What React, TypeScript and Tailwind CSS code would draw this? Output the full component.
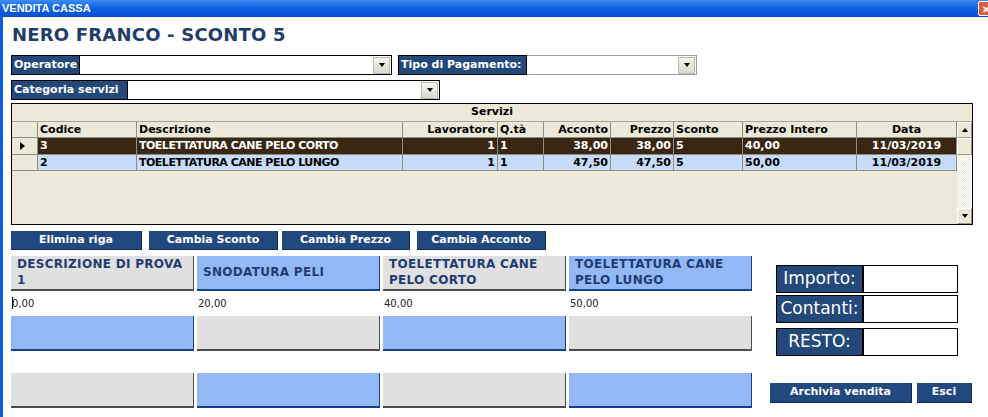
import clsx from 'clsx';

const comic = "font-['DejaVu_Sans',sans-serif] font-bold";
const tahoma = "font-['Liberation_Sans',Arial,sans-serif] font-bold";
const gridFont = "font-['DejaVu_Sans',Tahoma,sans-serif] font-bold";
const verdana = "font-['DejaVu_Sans',Verdana,sans-serif]";

type Col = { title: string; align: string };

const columns: Col[] = [
  { title: '', align: 'text-left' },
  { title: 'Codice', align: 'text-left' },
  { title: 'Descrizione', align: 'text-left' },
  { title: 'Lavoratore', align: 'text-right' },
  { title: 'Q.tà', align: 'text-left' },
  { title: 'Acconto', align: 'text-right' },
  { title: 'Prezzo', align: 'text-right' },
  { title: 'Sconto', align: 'text-left' },
  { title: 'Prezzo Intero', align: 'text-left' },
  { title: 'Data', align: 'text-center' },
];

const righe = [
  ['3', 'TOELETTATURA CANE PELO CORTO', '1', '1', '38,00', '38,00', '5', '40,00', '11/03/2019'],
  ['2', 'TOELETTATURA CANE PELO LUNGO', '1', '1', '47,50', '47,50', '5', '50,00', '11/03/2019'],
];

const gridCols = 'grid grid-cols-[26px_99px_266px_95px_46px_67px_63px_69px_114px_100px]';

type TileData = { text: string; blue: boolean };

const tiles: TileData[][] = [
  [
    { text: 'DESCRIZIONE DI PROVA 1', blue: false },
    { text: 'SNODATURA PELI', blue: true },
    { text: 'TOELETTATURA CANE PELO CORTO', blue: false },
    { text: 'TOELETTATURA CANE PELO LUNGO', blue: true },
  ],
  [
    { text: '', blue: true },
    { text: '', blue: false },
    { text: '', blue: true },
    { text: '', blue: false },
  ],
  [
    { text: '', blue: false },
    { text: '', blue: true },
    { text: '', blue: false },
    { text: '', blue: true },
  ],
];

const prezzi = ['0,00', '20,00', '40,00', '50,00'];

const DropArrow = () => (
  <div className="w-[17px] h-[17px] bg-linear-to-b from-[#f6f5f0] to-[#dcd9cc] border border-[#bcb9ab] flex items-center justify-center">
    <span className="block w-0 h-0 border-l-[3.5px] border-r-[3.5px] border-t-[4px] border-l-transparent border-r-transparent border-t-black" />
  </div>
);

const Label = ({ text, width }: { text: string; width: string }) => (
  <div className={clsx(comic, width, 'h-full bg-[#23487a] border border-black text-white text-[11px] flex items-center px-[2px] whitespace-nowrap')}>
    {text}
  </div>
);

const Combo = ({ width, border }: { width: string; border: string }) => (
  <div className={clsx(width, border, 'h-full bg-white border flex items-center justify-end pr-[1px]')}>
    <DropArrow />
  </div>
);

const BlueButton = ({ text, width }: { text: string; width: string }) => (
  <div className={clsx(comic, width, 'h-full bg-[#22497f] border-b border-r border-[#10284a] text-white text-[11px] flex items-center justify-center')}>
    {text}
  </div>
);

const Tile = ({ text, blue }: TileData) => (
  <div
    className={clsx(
      comic,
      'w-[183px] h-[35px] flex items-center px-[6px] pb-[2px] text-[12px] leading-[16px] tracking-[0.3px] text-[#1f3d74]',
      blue ? 'bg-[#94b8f4] border-b-2 border-r border-[#17408c]' : 'bg-[#e0e0e0] border-b-2 border-r border-[#4d4d4d]'
    )}
  >
    {text}
  </div>
);

const ArrowBtn = ({ up }: { up: boolean }) => (
  <div className="w-[15px] h-[16px] bg-[#ece9d8] border border-t-white border-l-white border-r-[#9d9a8c] border-b-[#9d9a8c] flex items-center justify-center">
    <span
      className={clsx(
        'block w-0 h-0 border-l-[3px] border-r-[3px] border-l-transparent border-r-transparent',
        up ? 'border-b-[4px] border-b-black' : 'border-t-[4px] border-t-black'
      )}
    />
  </div>
);

const CassaField = ({ text, gap }: { text: string; gap: string }) => (
  <div className={clsx(gap, 'flex h-[28px] ml-[6px]')}>
    <div className={clsx(verdana, 'w-[87px] h-full bg-[#23487a] border border-black text-white text-[17px] flex items-center justify-center')}>
      {text}
    </div>
    <div className="w-[95px] h-full bg-white border border-black" />
  </div>
);

export default function App() {
  return (
    <div className="w-[988px] h-[417px] overflow-hidden bg-white flex flex-col">
      {/* Title bar */}
      <div className="h-[17px] shrink-0 bg-linear-to-b from-[#3a8cf4] via-[#0d5fe3] to-[#0a50d0] flex items-center justify-between pl-[2px]">
        <span className={clsx(tahoma, 'text-white text-[11px] leading-none')}>VENDITA CASSA</span>
        <div className="w-[15px] h-[15px] mr-[-5px] rounded-[2px] bg-[#dc5b3a] border border-white flex items-center justify-center text-white text-[10px] font-bold leading-none">
          ✕
        </div>
      </div>

      <div className="flex flex-1">
        <div className="w-[3px] bg-[#0e5ee0]" />
        <div className="flex-1 pl-[8px] flex flex-col">
          {/* Cliente */}
          <div className={clsx(comic, 'mt-[4px] h-[28px] leading-[28px] text-[18px] text-[#1f3d6b] pl-[1px] tracking-[0.2px] whitespace-pre')}>
            NERO FRANCO - SCONTO 5
          </div>

          {/* Operatore / Pagamento */}
          <div className="mt-[6px] h-[20px] flex">
            <Label text="Operatore" width="w-[69px]" />
            <Combo width="w-[312px]" border="border-black border-l-0" />
            <div className="w-[6px]" />
            <Label text="Tipo di Pagamento:" width="w-[129px]" />
            <Combo width="w-[170px]" border="border-[#9f9f9f] border-l-0" />
          </div>

          {/* Categoria */}
          <div className="mt-[5px] h-[20px] flex">
            <Label text="Categoria servizi" width="w-[117px]" />
            <Combo width="w-[312px]" border="border-black border-l-0" />
          </div>

          {/* Servizi grid */}
          <div className={clsx(gridFont, 'mt-[3px] w-[962px] h-[122px] border border-black bg-[#ece9d8] text-[11px] flex flex-col')}>
            <div className="h-[18px] border-b border-[#a7a496] flex items-center justify-center">Servizi</div>
            <div className="flex flex-1">
              <div className="w-[945px] flex flex-col">
                <div className={clsx(gridCols, 'h-[16px] border-b border-[#8f8c80]')}>
                  {columns.map((c, i) => (
                    <div key={i} className={clsx(c.align, 'border-r border-[#8f8c80] px-[2px] leading-[15px] whitespace-nowrap')}>
                      {c.title}
                    </div>
                  ))}
                </div>
                {righe.map((r, ri) => (
                  <div key={ri} className={clsx(gridCols, ri === 0 ? 'h-[17px]' : 'h-[16px]', 'border-b border-[#8f8c80]')}>
                    <div className="border-r border-[#8f8c80] bg-[#ece9d8] flex items-center pl-[8px]">
                      {ri === 0 && (
                        <span className="block w-0 h-0 border-t-[4.5px] border-b-[4.5px] border-l-[5px] border-t-transparent border-b-transparent border-l-black" />
                      )}
                    </div>
                    {r.map((v, ci) => (
                      <div
                        key={ci}
                        className={clsx(
                          columns[ci + 1].align,
                          ci === 1 && 'tracking-[-0.5px]',
                          'border-r border-[#8f8c80] px-[2px] whitespace-nowrap overflow-hidden',
                          ri === 0 ? 'bg-[#3a2713] text-white leading-[16px]' : 'bg-[#c6dcf8] text-black leading-[15px]'
                        )}
                      >
                        {v}
                      </div>
                    ))}
                  </div>
                ))}
              </div>
              {/* scrollbar */}
              <div className="w-[15px] flex flex-col">
                <ArrowBtn up />
                <div className="h-[17px] bg-[#ece9d8] border border-t-white border-l-white border-r-[#9d9a8c] border-b-[#9d9a8c]" />
                <div className="flex-1 bg-[repeating-conic-gradient(#ece9d8_0%_25%,#ffffff_0%_50%)] bg-[length:2px_2px]" />
                <ArrowBtn up={false} />
              </div>
            </div>
          </div>

          {/* Parte bassa */}
          <div className="mt-[6px] flex">
            <div className="w-[741px] flex flex-col">
              <div className="h-[19px] flex">
                <BlueButton text="Elimina riga" width="w-[131px]" />
                <div className="w-[7px]" />
                <BlueButton text="Cambia Sconto" width="w-[129px]" />
                <div className="w-[4px]" />
                <BlueButton text="Cambia Prezzo" width="w-[128px]" />
                <div className="w-[7px]" />
                <BlueButton text="Cambia Acconto" width="w-[129px]" />
              </div>

              <div className="mt-[6px] flex gap-[3px]">
                {tiles[0].map((t, i) => (
                  <Tile key={i} {...t} />
                ))}
              </div>
              <div className={clsx(verdana, 'h-[25px] flex gap-[3px] text-[10px] text-[#222]')}>
                {prezzi.map((p, i) => (
                  <div key={i} className="w-[183px] flex items-center pl-[1px] pb-[1px]">
                    {i === 0 && <span className="block w-px h-[12px] bg-black mr-[-1px]" />}
                    {p}
                  </div>
                ))}
              </div>
              <div className="flex gap-[3px]">
                {tiles[1].map((t, i) => (
                  <Tile key={i} {...t} />
                ))}
              </div>
              <div className="mt-[22px] flex gap-[3px]">
                {tiles[2].map((t, i) => (
                  <Tile key={i} {...t} />
                ))}
              </div>
            </div>

            <div className="ml-[18px] w-[202px] flex flex-col">
              <CassaField text="Importo:" gap="mt-[34px]" />
              <CassaField text="Contanti:" gap="mt-[2px]" />
              <CassaField text="RESTO:" gap="mt-[5px]" />
              <div className="mt-[27px] h-[20px] flex gap-[5px]">
                <BlueButton text="Archivia vendita" width="w-[142px]" />
                <BlueButton text="Esci" width="w-[55px]" />
              </div>
            </div>
          </div>
        </div>
      </div>
    </div>
  );
}
